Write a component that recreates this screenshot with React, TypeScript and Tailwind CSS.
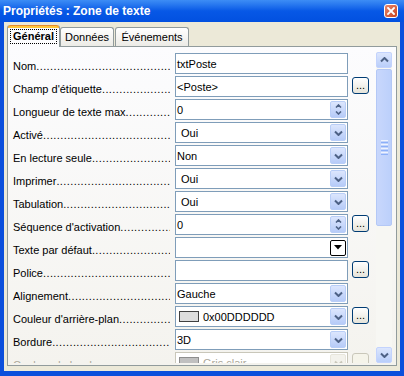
import React from "react";

type Kind = "text" | "spin" | "list" | "combo" | "color";

type Row = {
  label: string;
  kind: Kind;
  value: string;
  more?: boolean;
  indent?: boolean;
  disabled?: boolean;
  swatch?: string;
};

const rows: Row[] = [
  { label: "Nom", kind: "text", value: "txtPoste" },
  { label: "Champ d'étiquette", kind: "text", value: "<Poste>", more: true },
  { label: "Longueur de texte max", kind: "spin", value: "0" },
  { label: "Activé", kind: "list", value: "Oui", indent: true },
  { label: "En lecture seule", kind: "list", value: "Non" },
  { label: "Imprimer", kind: "list", value: "Oui", indent: true },
  { label: "Tabulation", kind: "list", value: "Oui", indent: true },
  { label: "Séquence d'activation", kind: "spin", value: "0", more: true },
  { label: "Texte par défaut", kind: "combo", value: "" },
  { label: "Police", kind: "text", value: "", more: true },
  { label: "Alignement", kind: "list", value: "Gauche" },
  {
    label: "Couleur d'arrière-plan",
    kind: "color",
    value: "0x00DDDDDD",
    more: true,
    swatch: "#DDDDDD",
  },
  { label: "Bordure", kind: "list", value: "3D" },
  {
    label: "Couleur de bordure",
    kind: "color",
    value: "Gris clair",
    more: true,
    disabled: true,
    swatch: "#C0C0C0",
  },
];

function Chevron({ up, color = "#4D6185" }: { up?: boolean; color?: string }) {
  return (
    <svg width="9" height="6" viewBox="0 0 9 6">
      <path
        d={up ? "M1 4.5 L4.5 1 L8 4.5" : "M1 1.5 L4.5 5 L8 1.5"}
        stroke={color}
        strokeWidth="2"
        fill="none"
      />
    </svg>
  );
}

function SmallChevron({ up }: { up?: boolean }) {
  return (
    <svg width="7" height="4" viewBox="0 0 7 4">
      <path
        d={up ? "M1 3.5 L3.5 1 L6 3.5" : "M1 0.5 L3.5 3 L6 0.5"}
        stroke="#4D6185"
        strokeWidth="1.6"
        fill="none"
      />
    </svg>
  );
}

function XpButton({ kind, disabled }: { kind: Kind; disabled?: boolean }) {
  if (kind === "combo") {
    return (
      <div className="mr-[1px] flex h-[16px] w-[16px] items-center justify-center rounded-[2px] border border-black bg-white">
        <svg width="8" height="5" viewBox="0 0 8 5">
          <path d="M0 0 L8 0 L4 4.5 Z" fill="black" />
        </svg>
      </div>
    );
  }
  if (disabled) {
    return (
      <div className="mr-[1px] flex h-[17px] w-[16px] items-center justify-center rounded-[2px] border border-[#E8E6DC] bg-[#F3F2EC]">
        <Chevron color="#C9C7BA" />
      </div>
    );
  }
  if (kind === "spin") {
    return (
      <div className="mr-[1px] flex h-[17px] w-[16px] flex-col items-center justify-center gap-[3px] rounded-[2px] border border-[#B9CEF7] bg-gradient-to-b from-[#DCE6FD] to-[#B6CBF8]">
        <SmallChevron up />
        <SmallChevron />
      </div>
    );
  }
  return (
    <div className="mr-[1px] flex h-[17px] w-[16px] items-center justify-center rounded-[2px] border border-[#B9CEF7] bg-gradient-to-b from-[#DCE6FD] to-[#B6CBF8]">
      <Chevron />
    </div>
  );
}

function MoreButton({ disabled }: { disabled?: boolean }) {
  return (
    <div
      className={
        disabled
          ? "ml-[4px] mt-[1px] flex h-[17px] w-[17px] items-end justify-center rounded-[3px] border border-[#C9C7BA] bg-[#F5F4EA]"
          : "ml-[4px] mt-[1px] flex h-[17px] w-[17px] items-end justify-center rounded-[3px] border border-[#003C74] bg-gradient-to-b from-white to-[#E6E4DA] text-[11px] leading-[15px] text-black"
      }
    >
      {disabled ? "" : "..."}
    </div>
  );
}

function Field({ row }: { row: Row }) {
  const textColor = row.disabled ? "text-[#ACA899]" : "text-black";
  const border = row.disabled ? "border-[#C9C7BA]" : "border-[#7F9DB9]";
  return (
    <div
      className={`flex h-[21px] w-[173px] shrink-0 items-center border ${border} bg-white`}
    >
      {row.kind === "color" ? (
        <div className="flex flex-1 items-center">
          <div
            className={`ml-[3px] h-[11px] w-[20px] border ${row.disabled ? "border-[#8E8E8E]" : "border-[#404040]"}`}
            style={{ background: row.swatch }}
          />
          <span
            className={`ml-[4px] pt-[1px] text-[11px] leading-[19px] ${textColor}`}
          >
            {row.value}
          </span>
        </div>
      ) : (
        <span
          className={`flex-1 whitespace-nowrap pt-[1px] text-[11px] leading-[19px] ${textColor} ${row.indent ? "pl-[5px]" : "pl-[1px]"}`}
        >
          {row.value}
        </span>
      )}
      {row.kind !== "text" && (
        <XpButton kind={row.kind} disabled={row.disabled} />
      )}
    </div>
  );
}

function PropertyRow({ row }: { row: Row }) {
  return (
    <div className="flex h-[21px] shrink-0">
      <div
        className={`flex w-[157px] shrink-0 pt-[7px] text-[11px] leading-[13px] ${row.disabled ? "text-[#ACA899]" : "text-black"}`}
      >
        <span className="shrink-0 whitespace-nowrap">{row.label}</span>
        <span className="flex-1 overflow-hidden whitespace-nowrap tracking-[0.4px]">
          {".".repeat(50)}
        </span>
      </div>
      <div className="ml-[5px] flex">
        <Field row={row} />
        {row.more && <MoreButton disabled={row.disabled} />}
      </div>
    </div>
  );
}

function Scrollbar() {
  return (
    <div className="mb-[2px] mr-[4px] mt-[5px] flex w-[16px] shrink-0 flex-col bg-[#F7F7F3]">
      <div className="flex h-[16px] w-[16px] items-center justify-center rounded-[2px] border border-[#C3D3FD] bg-gradient-to-b from-[#DCE6FD] to-[#B9CEFA]">
        <Chevron up />
      </div>
      <div className="mt-[1px] flex h-[157px] flex-col items-center justify-center gap-[1px] rounded-[2px] border border-[#B4C8F6] bg-gradient-to-r from-[#C8D7FC] to-[#BCD0FB]">
        <div className="h-[1px] w-[7px] bg-[#EEF3FE]" />
        <div className="h-[1px] w-[7px] bg-[#8CB0F8]" />
        <div className="h-[1px] w-[7px] bg-[#EEF3FE]" />
        <div className="h-[1px] w-[7px] bg-[#8CB0F8]" />
        <div className="h-[1px] w-[7px] bg-[#EEF3FE]" />
        <div className="h-[1px] w-[7px] bg-[#8CB0F8]" />
        <div className="h-[1px] w-[7px] bg-[#EEF3FE]" />
        <div className="h-[1px] w-[7px] bg-[#8CB0F8]" />
      </div>
      <div className="flex-1" />
      <div className="flex h-[16px] w-[16px] items-center justify-center rounded-[2px] border border-[#C3D3FD] bg-gradient-to-b from-[#DCE6FD] to-[#B9CEFA]">
        <Chevron />
      </div>
    </div>
  );
}

export default function App() {
  return (
    <div
      className="flex h-[376px] w-[404px] flex-col overflow-hidden bg-[#0B4FDC]"
      style={{ fontFamily: '"Liberation Sans", Arial, sans-serif' }}
    >
      {/* title bar */}
      <div className="flex h-[22px] shrink-0 items-center bg-gradient-to-b from-[#3D8DF5] via-[#0758E6] to-[#0250E0] pl-[3px] pr-[6px]">
        <span className="flex-1 text-[12px] font-bold text-white">
          Propriétés : Zone de texte
        </span>
        <div className="flex h-[14px] w-[14px] items-center justify-center rounded-[3px] border border-white bg-gradient-to-br from-[#E8866A] to-[#C8401C]">
          <svg width="8" height="8" viewBox="0 0 8 8">
            <path
              d="M1 1 L7 7 M7 1 L1 7"
              stroke="white"
              strokeWidth="1.8"
              strokeLinecap="square"
            />
          </svg>
        </div>
      </div>

      {/* dialog body */}
      <div className="mx-[4px] mb-[5px] flex flex-1 flex-col bg-[#ECE9D8] px-[3px] pb-[5px] pt-[3px]">
        <div className="flex h-[21px] shrink-0 items-end text-[11px] text-black">
          <div className="relative z-10 -mb-px flex h-[22px] w-[53px] flex-col rounded-t-[3px] border-x border-[#919B9C] bg-[#FCFCFE]">
            <div className="h-[3px] rounded-t-[3px] bg-[#FFC83C] shadow-[inset_0_1px_0_#E68B2C]" />
            <div className="mx-[2px] mt-[1px] flex h-[15px] items-center justify-center border border-dotted border-black font-bold">
              Général
            </div>
          </div>
          <div className="flex h-[19px] w-[54px] items-center justify-center rounded-t-[3px] border-x border-t border-[#919B9C] bg-gradient-to-b from-white to-[#ECEBE6]">
            Données
          </div>
          <div className="ml-[1px] flex h-[19px] w-[74px] items-center justify-center rounded-t-[3px] border-x border-t border-[#919B9C] bg-gradient-to-b from-white to-[#ECEBE6]">
            Événements
          </div>
        </div>

        <div className="flex h-[320px] shrink-0 border border-[#919B9C] bg-gradient-to-b from-[#FCFCFE] to-[#F4F3EE]">
          <div className="mb-[2px] flex flex-1 flex-col gap-[2px] overflow-hidden pl-[5px] pt-[6px]">
            {rows.map((row) => (
              <PropertyRow key={row.label} row={row} />
            ))}
          </div>
          <Scrollbar />
        </div>
      </div>
    </div>
  );
}
